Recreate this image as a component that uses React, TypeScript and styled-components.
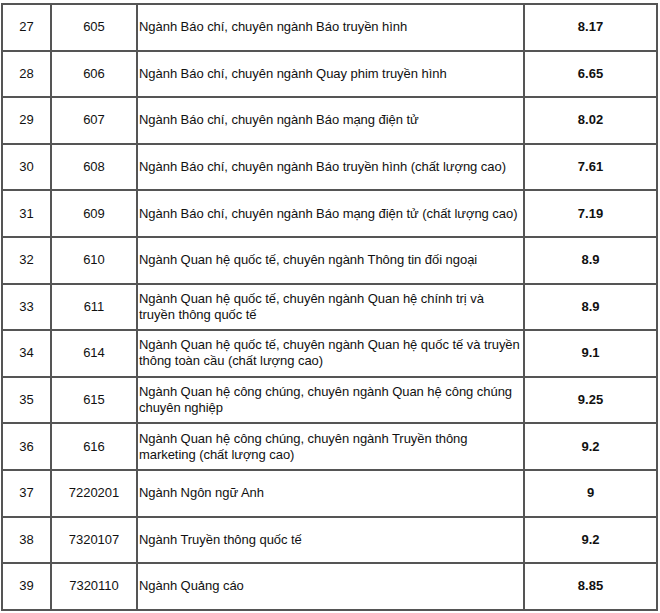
import React from 'react';
import { styled, createGlobalStyle } from 'styled-components';

const rows: [string, string, string, string][] = [
  ['27', '605', 'Ngành Báo chí, chuyên ngành Báo truyền hình', '8.17'],
  ['28', '606', 'Ngành Báo chí, chuyên ngành Quay phim truyền hình', '6.65'],
  ['29', '607', 'Ngành Báo chí, chuyên ngành Báo mạng điện tử', '8.02'],
  ['30', '608', 'Ngành Báo chí, chuyên ngành Báo truyền hình (chất lượng cao)', '7.61'],
  ['31', '609', 'Ngành Báo chí, chuyên ngành Báo mạng điện tử (chất lượng cao)', '7.19'],
  ['32', '610', 'Ngành Quan hệ quốc tế, chuyên ngành Thông tin đối ngoại', '8.9'],
  ['33', '611', 'Ngành Quan hệ quốc tế, chuyên ngành Quan hệ chính trị và truyền thông quốc tế', '8.9'],
  ['34', '614', 'Ngành Quan hệ quốc tế, chuyên ngành Quan hệ quốc tế và truyền thông toàn cầu (chất lượng cao)', '9.1'],
  ['35', '615', 'Ngành Quan hệ công chúng, chuyên ngành Quan hệ công chúng chuyên nghiệp', '9.25'],
  ['36', '616', 'Ngành Quan hệ công chúng, chuyên ngành Truyền thông marketing (chất lượng cao)', '9.2'],
  ['37', '7220201', 'Ngành Ngôn ngữ Anh', '9'],
  ['38', '7320107', 'Ngành Truyền thông quốc tế', '9.2'],
  ['39', '7320110', 'Ngành Quảng cáo', '8.85'],
];

const GlobalStyle = createGlobalStyle`
  body {
    margin: 0;
    background: #fff;
    font-family: "Liberation Sans", Arial, sans-serif;
  }
`;

const Page = styled.div`
  padding: 3px 0 0 1px;
`;

const Table = styled.table`
  border-collapse: collapse;
  table-layout: fixed;
  width: 655px;
  font-size: 13px;
  color: #111;
`;

const Col = styled.col<{ $w: number }>`
  width: ${(p) => p.$w}px;
`;

const Row = styled.tr`
  height: 46.6px;
`;

const Cell = styled.td`
  border: 2px solid #555;
  padding: 0 2px;
  text-align: center;
  line-height: 16px;
  vertical-align: middle;
`;

const NameCell = styled(Cell)`
  text-align: left;
  padding: 0 0 0 1px;
  letter-spacing: -0.05px;
`;

const ScoreCell = styled(Cell)`
  font-weight: 700;
`;

export default function App() {
  return (
    <Page>
      <GlobalStyle />
      <Table>
        <colgroup>
          <Col $w={49} />
          <Col $w={86} />
          <Col $w={387} />
          <Col $w={133} />
        </colgroup>
        <tbody>
          {rows.map(([no, code, name, score]) => (
            <Row key={no}>
              <Cell>{no}</Cell>
              <Cell>{code}</Cell>
              <NameCell>{name}</NameCell>
              <ScoreCell>{score}</ScoreCell>
            </Row>
          ))}
        </tbody>
      </Table>
    </Page>
  );
}
